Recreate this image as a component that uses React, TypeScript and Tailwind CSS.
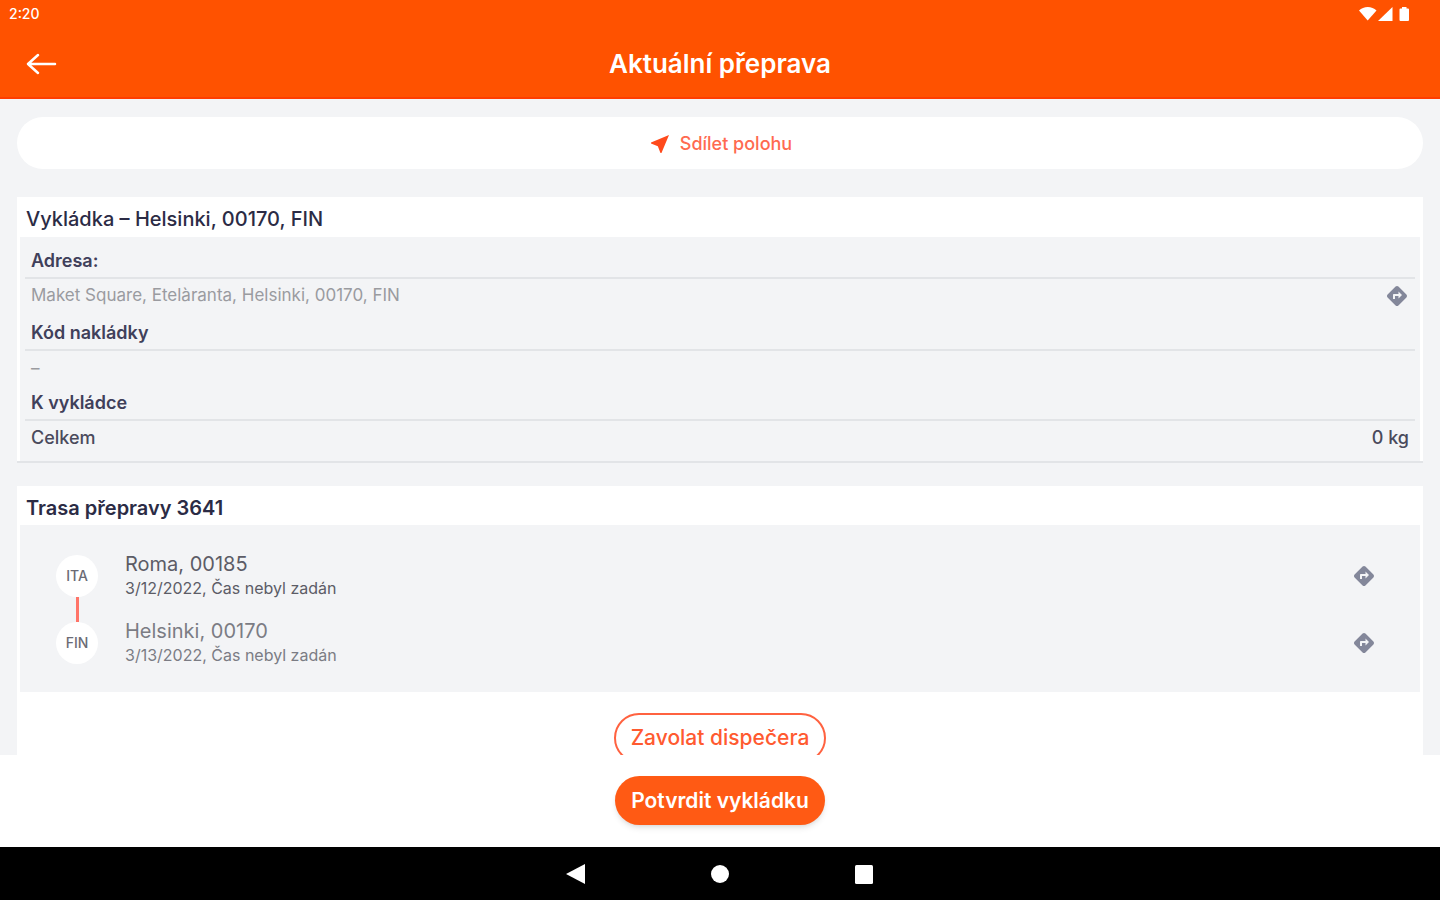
import React from 'react';
import { clsx } from 'clsx';
import { MdDirections, MdNearMe } from 'react-icons/md';

interface Stop {
  country: string;
  place: string;
  time: string;
  current?: boolean;
}

const STOPS: Stop[] = [
  { country: 'ITA', place: 'Roma, 00185', time: '3/12/2022, Čas nebyl zadán', current: true },
  { country: 'FIN', place: 'Helsinki, 00170', time: '3/13/2022, Čas nebyl zadán' },
];

export default function App() {
  return (
    <div className="flex h-screen flex-col overflow-hidden bg-white font-['Inter',sans-serif] text-[#2b2b45]">
      <Header />
      <main className="flex-1 overflow-hidden bg-[#f3f4f6] px-[17px] pt-[18px]">
        <button
          type="button"
          className="flex h-[52px] w-full items-center justify-center gap-2 rounded-full bg-white pt-0.5 text-lg font-medium text-[#ff6a50]"
        >
          <MdNearMe className="size-6 text-[#ff4a1c]" />
          Sdílet polohu
        </button>
        <UnloadingCard />
        <RouteCard />
      </main>
      <footer className="flex h-[92px] shrink-0 items-start justify-center bg-white pt-[21px]">
        <button
          type="button"
          className="h-[49px] rounded-full bg-[#ff5a14] px-4 text-[21px] font-semibold text-white shadow-md"
        >
          Potvrdit vykládku
        </button>
      </footer>
      <SystemNav />
    </div>
  );
}

// Status bar and app bar share one orange surface
function Header() {
  return (
    <header className="shrink-0 border-b-2 border-[#ff3d00] bg-[#ff5200] text-white">
      <div className="flex h-7 items-center justify-between pr-[29px] pl-[9px]">
        <span className="text-sm font-medium">2:20</span>
        <svg className="h-4 w-[53px]" viewBox="0 0 53 16" fill="currentColor">
          <path d="M1 4.5C5.500-.2 14-.2 18.500 4.500L9.700 14.500z" />
          <path d="M34.500 1v14H20z" />
          <path d="M42.500 2.500h1.500V1h4.500v1.500h1.500q1 0 1 1V14q0 1-1 1h-7.500q-1 0-1-1V3.500q0-1 1-1z" />
        </svg>
      </div>
      <div className="grid h-[69px] grid-cols-[1fr_auto_1fr] items-center px-[26px] pt-0.5">
        <button type="button" aria-label="Zpět" className="justify-self-start">
          <svg
            className="h-[22px] w-[31px]"
            viewBox="0 0 31 22"
            fill="none"
            stroke="currentColor"
            strokeWidth={2.5}
            strokeLinecap="round"
            strokeLinejoin="round"
          >
            <path d="M29 11H2M12 2L2 11l10 9" />
          </svg>
        </button>
        <h1 className="text-[26px] font-semibold">Aktuální přeprava</h1>
      </div>
    </header>
  );
}

function UnloadingCard() {
  return (
    <section className="mt-7 border-b-2 border-[#e2e4e7] bg-white px-[3px]">
      <h2 className="flex h-10 items-center px-[6px] pt-1 text-xl font-medium">
        Vykládka – Helsinki, 00170, FIN
      </h2>
      <div className="bg-[#f3f4f6] px-[5px] pt-1 pb-1.5">
        <Label>Adresa:</Label>
        <div className="flex h-[34px] items-center justify-between px-[6px] text-[17px] text-[#9a9ba0]">
          <span>Maket Square, Etelàranta, Helsinki, 00170, FIN</span>
          <DirectionsButton />
        </div>
        <Label>Kód nakládky</Label>
        <div className="flex h-8 items-center px-[6px] pt-1 text-[17px] text-[#9a9ba0]">–</div>
        <Label>K vykládce</Label>
        <div className="flex h-[34px] items-center justify-between px-[6px] text-lg font-medium text-[#4a4a5c]">
          <span>Celkem</span>
          <span>0 kg</span>
        </div>
      </div>
    </section>
  );
}

function Label({ children }: { children: React.ReactNode }) {
  return (
    <h3 className="flex h-[38px] items-center border-b-2 border-[#e2e4e7] px-[6px] pt-1 text-lg font-semibold text-[#40405a]">
      {children}
    </h3>
  );
}

function DirectionsButton() {
  return (
    <button type="button" aria-label="Navigovat" className="text-[#83879a]">
      <MdDirections className="size-6" />
    </button>
  );
}

function RouteCard() {
  return (
    <section className="mt-[23px] bg-white px-[3px]">
      <h2 className="flex h-[39px] items-center px-[6px] pt-1 text-xl font-semibold">
        Trasa přepravy 3641
      </h2>
      <ol className="flex h-[167px] flex-col gap-[25px] bg-[#f3f4f6] pt-[30px] pr-11 pl-9">
        {STOPS.map((stop, i) => (
          <li key={stop.country} className="relative flex h-[42px] items-center">
            {/* Connector up to the previous stop */}
            {i > 0 && <span className="absolute -top-[25px] left-5 h-[25px] w-[3px] bg-[#ff7468]" />}
            <span className="flex size-[42px] items-center justify-center rounded-full bg-white text-sm font-medium text-[#6b6b75]">
              {stop.country}
            </span>
            <div className={clsx('ml-[27px] flex-1', stop.current ? 'text-[#5c5c66]' : 'text-[#7b7c84]')}>
              <p className="text-xl leading-6">{stop.place}</p>
              <p className="text-base leading-6">{stop.time}</p>
            </div>
            <DirectionsButton />
          </li>
        ))}
      </ol>
      <div className="flex justify-center pt-[21px] pb-6">
        <button
          type="button"
          className="h-[50px] rounded-full border-2 border-[#ff6240] px-[15px] text-[21px] font-medium text-[#ff5a30]"
        >
          Zavolat dispečera
        </button>
      </div>
    </section>
  );
}

// Android back / home / recents
function SystemNav() {
  return (
    <nav className="flex h-[53px] shrink-0 items-center justify-center gap-[120px] bg-black text-white">
      <button type="button" aria-label="Zpět">
        <svg className="size-6" viewBox="0 0 24 24" fill="currentColor">
          <path d="M21 2v20L2 12z" />
        </svg>
      </button>
      <button type="button" aria-label="Domů">
        <svg className="size-6" viewBox="0 0 24 24" fill="currentColor">
          <circle cx="12" cy="12" r="9" />
        </svg>
      </button>
      <button type="button" aria-label="Poslední aplikace">
        <svg className="size-6" viewBox="0 0 24 24" fill="currentColor">
          <rect x="3" y="3" width="18" height="19" rx="1.5" />
        </svg>
      </button>
    </nav>
  );
}
